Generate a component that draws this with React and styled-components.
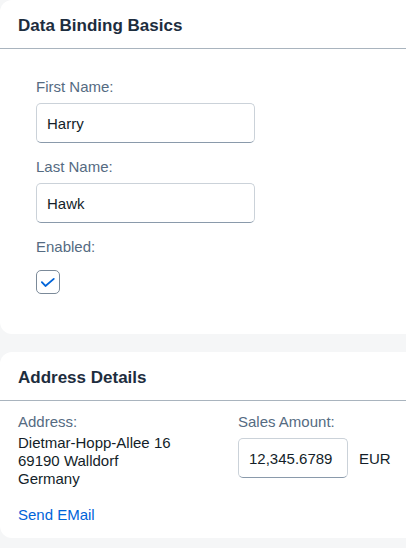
import React from "react";
import styled, { createGlobalStyle } from "styled-components";

const GlobalStyle = createGlobalStyle`
  html, body {
    margin: 0;
    padding: 0;
    background: #f5f6f7;
    overflow: hidden;
  }
  body {
    font-family: "Liberation Sans", Arial, sans-serif;
    color: #131e29;
  }
  * { box-sizing: border-box; }
`;

const Page = styled.div`
  width: 100%;
  display: flex;
  flex-direction: column;
  gap: 18px;
`;

const Card = styled.section`
  background: #ffffff;
  border-radius: 12px 0 0 12px;
  overflow: hidden;
`;

const CardHeader = styled.header`
  height: 49px;
  padding: 16px 18px 0;
  border-bottom: 1px solid #a9b4be;
`;

const Title = styled.h2`
  margin: 0;
  font-size: 17px;
  line-height: 20px;
  font-weight: 700;
  color: #1d2d3e;
`;

const Form = styled.div`
  display: flex;
  flex-direction: column;
  gap: 15px;
  padding: 29px 36px 33px;
`;

const Field = styled.div`
  display: flex;
  flex-direction: column;
  gap: ${(p) => p.$gap ?? 7}px;
`;

const Label = styled.label`
  font-size: 15px;
  line-height: 18px;
  color: #556b82;
`;

const Input = styled.input`
  width: ${(p) => p.$width}px;
  height: 40px;
  padding: 0 10px;
  border: 1px solid #cbd2d9;
  border-bottom-color: #8a9aab;
  border-radius: 5px;
  background: #ffffff;
  font-family: "Liberation Sans", Arial, sans-serif;
  font-size: 15px;
  color: #131e29;
  outline: none;
`;

const CheckWrap = styled.div`
  height: 38px;
  display: flex;
  align-items: center;
`;

const CheckBox = styled.span`
  width: 24px;
  height: 24px;
  border: 1px solid #7b8a99;
  border-radius: 5px;
  display: flex;
  align-items: center;
  justify-content: center;
`;

const Details = styled.div`
  display: grid;
  grid-template-columns: 220px auto;
  padding: 12px 18px 14px;
`;

const Column = styled.div`
  display: flex;
  flex-direction: column;
`;

const AddressText = styled.div`
  margin-top: 3px;
  font-size: 15px;
  line-height: 18px;
  color: #131e29;
`;

const Link = styled.a`
  margin-top: 18px;
  font-size: 15px;
  line-height: 18px;
  color: #0064d9;
  text-decoration: none;
  cursor: pointer;
`;

const AmountRow = styled.div`
  display: flex;
  align-items: center;
  gap: 11px;
`;

const Unit = styled.span`
  font-size: 15px;
  color: #131e29;
`;

export default function App() {
  return (
    <>
      <GlobalStyle />
      <Page>
        <Card>
          <CardHeader>
            <Title>Data Binding Basics</Title>
          </CardHeader>
          <Form>
            <Field>
              <Label>First Name:</Label>
              <Input $width={219} defaultValue="Harry" />
            </Field>
            <Field>
              <Label>Last Name:</Label>
              <Input $width={219} defaultValue="Hawk" />
            </Field>
            <Field>
              <Label>Enabled:</Label>
              <CheckWrap>
                <CheckBox>
                  <svg width="24" height="24" viewBox="0 0 24 24">
                    <path
                      d="M5.3 12.2 L9.2 16.3 L18.3 8.6"
                      fill="none"
                      stroke="#0064d9"
                      strokeWidth="2"
                      strokeLinecap="round"
                      strokeLinejoin="round"
                    />
                  </svg>
                </CheckBox>
              </CheckWrap>
            </Field>
          </Form>
        </Card>
        <Card>
          <CardHeader>
            <Title>Address Details</Title>
          </CardHeader>
          <Details>
            <Column>
              <Label>Address:</Label>
              <AddressText>
                Dietmar-Hopp-Allee 16
                <br />
                69190 Walldorf
                <br />
                Germany
              </AddressText>
              <Link>Send EMail</Link>
            </Column>
            <Field>
              <Label>Sales Amount:</Label>
              <AmountRow>
                <Input $width={110} defaultValue="12,345.6789" />
                <Unit>EUR</Unit>
              </AmountRow>
            </Field>
          </Details>
        </Card>
      </Page>
    </>
  );
}
